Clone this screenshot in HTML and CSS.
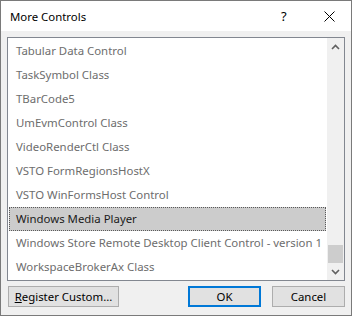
FILE: index.html
```html
<!DOCTYPE html>
<html lang="en">
<head>
  <meta charset="UTF-8">
  <title>More Controls</title>
  <link rel="stylesheet" href="styles.css">
</head>
<body>

  <div class="dialog">
    <div class="titlebar">
      <span class="title">More Controls</span>
      <span class="help">?</span>
      <span class="close">
        <svg width="11" height="11" viewBox="0 0 11 11">
          <path d="M0.5 0.5 L10.5 10.5 M10.5 0.5 L0.5 10.5" stroke="#000" stroke-width="1" fill="none"/>
        </svg>
      </span>
    </div>

    <div class="content">
      <div class="listbox">
        <ul class="items">
          <li>Tabular Data Control</li>
          <li>TaskSymbol Class</li>
          <li>TBarCode5</li>
          <li>UmEvmControl Class</li>
          <li>VideoRenderCtl Class</li>
          <li>VSTO FormRegionsHostX</li>
          <li>VSTO WinFormsHost Control</li>
          <li class="selected">Windows Media Player</li>
          <li>Windows Store Remote Desktop Client Control - version 1</li>
          <li>WorkspaceBrokerAx Class</li>
        </ul>
        <div class="scrollbar">
          <div class="arrow">
            <svg width="9" height="6" viewBox="0 0 9 6">
              <path d="M1 5 L4.5 1.5 L8 5" stroke="#606060" stroke-width="1.6" fill="none"/>
            </svg>
          </div>
          <div class="track">
            <div class="thumb"></div>
          </div>
          <div class="arrow">
            <svg width="9" height="6" viewBox="0 0 9 6">
              <path d="M1 1 L4.5 4.5 L8 1" stroke="#606060" stroke-width="1.6" fill="none"/>
            </svg>
          </div>
        </div>
      </div>

      <div class="buttons">
        <button class="btn register"><u>R</u>egister Custom...</button>
        <span class="spacer"></span>
        <button class="btn default">OK</button>
        <button class="btn">Cancel</button>
      </div>
    </div>
  </div>

</body>
</html>
```

FILE: styles.css
```css
body {
  margin: 0;
  font-family: "Noto Sans", "DejaVu Sans", sans-serif;
  font-size: 11.4px;
}

.dialog {
  width: 352px;
  height: 316px;
  box-sizing: border-box;
  border: 1px solid #7a7a7a;
  background-color: #f0f0f0;
  display: flex;
  flex-direction: column;
}

.titlebar {
  height: 30px;
  background-color: #fff;
  display: flex;
  align-items: center;
  color: #000;
}

.title {
  margin-left: 9px;
  flex: 1;
}

.help {
  font-size: 13px;
  width: 12px;
  margin-right: 31px;
}

.close {
  display: flex;
  margin-right: 16px;
}

.content {
  flex: 1;
  padding: 6px 6px 0 6px;
}

.listbox {
  height: 244px;
  box-sizing: border-box;
  border: 1px solid #828790;
  background-color: #fff;
  display: flex;
}

.items {
  list-style: none;
  margin: 0;
  padding: 1px;
  flex: 1;
}

.items li {
  height: 24px;
  line-height: 24px;
  padding-left: 7px;
  color: #6d6d6d;
  white-space: nowrap;
  box-sizing: border-box;
}

.items li.selected {
  background-color: #cccccc;
  color: #1a1a1a;
  border: 1px dotted #5a5a5a;
  line-height: 22px;
  padding-left: 6px;
}

.scrollbar {
  width: 17px;
  background-color: #f0f0f0;
  display: flex;
  flex-direction: column;
}

.arrow {
  height: 17px;
  display: flex;
  align-items: center;
  justify-content: center;
}

.track {
  flex: 1;
  display: flex;
  flex-direction: column;
  justify-content: flex-end;
}

.thumb {
  height: 18px;
  margin: 0 1px;
  background-color: #cdcdcd;
}

.buttons {
  display: flex;
  margin-top: 5px;
  padding-left: 1px;
  gap: 11px;
}

.spacer {
  flex: 1;
}

.btn {
  height: 21px;
  width: 73px;
  padding: 0;
  font-family: inherit;
  font-size: 11.4px;
  color: #000;
  background-color: #e1e1e1;
  border: 1px solid #adadad;
  box-sizing: border-box;
}

.btn.register {
  width: 111px;
}

.btn.default {
  border: 2px solid #0078d7;
}
```
